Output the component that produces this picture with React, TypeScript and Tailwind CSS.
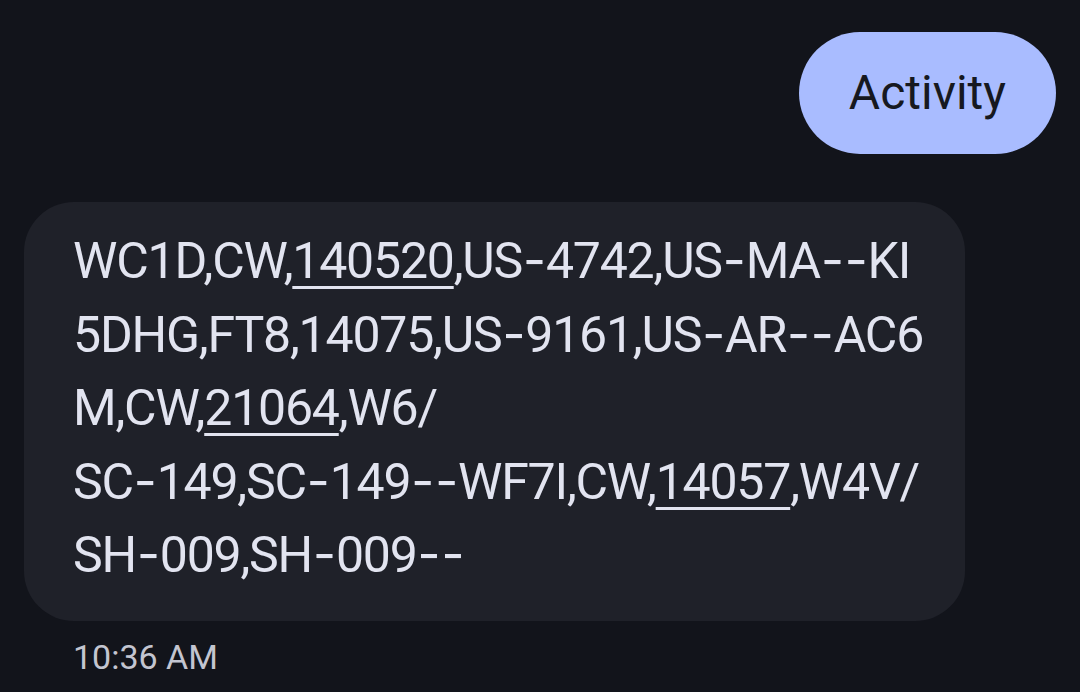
import React from 'react';

type Part = { text: string; link?: boolean };

const lines: Part[][] = [
  [{ text: 'WC1D,CW,' }, { text: '140520', link: true }, { text: ',US-4742,US-MA--KI' }],
  [{ text: '5DHG,FT8,14075,US-9161,US-AR--AC6' }],
  [{ text: 'M,CW,' }, { text: '21064', link: true }, { text: ',W6/' }],
  [{ text: 'SC-149,SC-149--WF7I,CW,' }, { text: '14057', link: true }, { text: ',W4V/' }],
  [{ text: 'SH-009,SH-009--' }],
];

// Roboto's hyphen is short; the source font's is longer with more air round it
function withDashes(text: string) {
  return text.split(/(-)/).map((s, i) =>
    s === '-' ? (
      <span key={i} className="mx-[1px] leading-none" style={{ fontFamily: 'Inter, sans-serif' }}>-</span>
    ) : (
      <React.Fragment key={i}>{s}</React.Fragment>
    )
  );
}

export default function App() {
  return (
    <div className="w-full h-[692px] bg-[#12141b] overflow-hidden" style={{ fontFamily: 'Roboto, "Noto Sans", sans-serif' }}>
      <div className="flex justify-end pt-8 pr-6">
        <div className="h-[122px] px-[50px] flex items-center rounded-full bg-[#a9bcff] text-[#161820] text-[48px] leading-none">
          Activity
        </div>
      </div>

      <div className="mt-12 ml-6 w-[941px] rounded-[50px] bg-[#1f2129] pl-[49px] pt-[23px] pb-[28px] text-[#e2e4f0] text-[50px] leading-[73.5px] tracking-[-1.2px]">
        {lines.map((line, i) => (
          <div key={i} className="whitespace-nowrap">
            {line.map((p, j) =>
              p.link ? (
                <span key={j} className="underline decoration-[3px] underline-offset-[8px]">{p.text}</span>
              ) : (
                <span key={j}>{withDashes(p.text)}</span>
              )
            )}
          </div>
        ))}
      </div>

      <div className="ml-[73px] mt-[19px] text-[34px] leading-none text-[#c3c5d0]">10:36 AM</div>
    </div>
  );
}
